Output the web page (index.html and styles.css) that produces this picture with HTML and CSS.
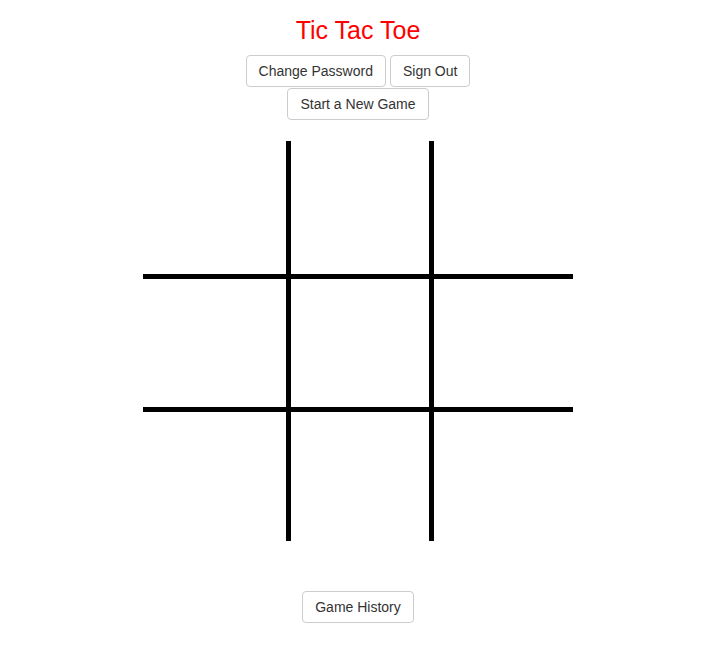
FILE: index.html
```html
<!DOCTYPE html>
<html>
<head>
<meta charset="utf-8">
<title>Tic Tac Toe</title>
<link rel="stylesheet" href="styles.css">
</head>
<body>
<div class="page">
  <h1 class="title">Tic Tac Toe</h1>
  <div class="controls">
    <div class="row">
      <button class="btn">Change Password</button>
      <button class="btn">Sign Out</button>
    </div>
    <div class="row">
      <button class="btn">Start a New Game</button>
    </div>
  </div>
  <div class="board">
    <div class="cell"></div><div class="cell"></div><div class="cell"></div>
    <div class="cell"></div><div class="cell"></div><div class="cell"></div>
    <div class="cell"></div><div class="cell"></div><div class="cell"></div>
  </div>
  <div class="footer">
    <button class="btn">Game History</button>
  </div>
</div>
</body>
</html>
```

FILE: styles.css
```css
html, body {
  margin: 0;
  padding: 0;
  background: #fff;
}
body {
  font-family: "Liberation Sans", Arial, Helvetica, sans-serif;
  color: #333;
  font-size: 14px;
}
.page {
  display: flex;
  flex-direction: column;
  align-items: center;
  padding-right: 1px;
}
.title {
  margin: 16px 0 11px;
  font-size: 25px;
  line-height: 28px;
  font-weight: normal;
  color: #ff0000;
}
.controls {
  display: flex;
  flex-direction: column;
  align-items: center;
  gap: 1px;
}
.row {
  display: flex;
  gap: 4px;
}
.btn {
  font-family: "Liberation Sans", Arial, Helvetica, sans-serif;
  font-size: 14px;
  line-height: 20px;
  color: #333;
  background: #fff;
  border: 1px solid #ccc;
  border-radius: 4px;
  padding: 5px 12px;
  margin: 0;
  cursor: pointer;
}
.board {
  margin-top: 21px;
  display: grid;
  grid-template-columns: 143px 138px 139px;
  grid-template-rows: 133px 128px 129px;
  gap: 5px;
  background: #000;
}
.cell {
  background: #fff;
}
.footer {
  margin-top: 50px;
}
```
